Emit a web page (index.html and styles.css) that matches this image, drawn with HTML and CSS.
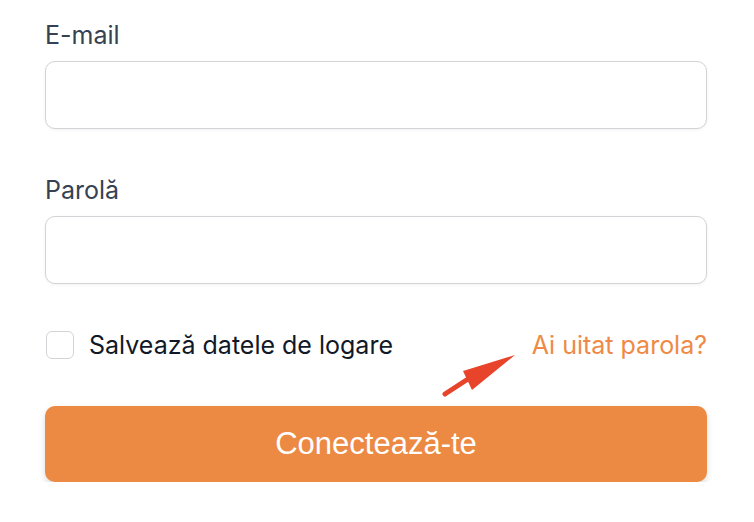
FILE: index.html
```html
<!DOCTYPE html>
<html lang="ro">
<head>
    <meta charset="UTF-8">
    <meta name="viewport" content="width=device-width, initial-scale=1.0">
    <title>Conectare</title>
    <link rel="stylesheet" href="styles.css">
</head>
<body>
    <form class="loginForm">
        <div class="field">
            <label for="email">E-mail</label>
            <input type="email" id="email">
        </div>

        <div class="field">
            <label for="password">Parolă</label>
            <input type="password" id="password">
        </div>

        <div class="optionsRow">
            <label class="remember">
                <span class="checkBox"></span>
                Salvează datele de logare
            </label>
            <a href="#" class="forgotLink">Ai uitat parola?</a>

            <!-- annotation arrow -->
            <svg class="hintArrow" width="80" height="50" viewBox="0 0 80 50">
                <line x1="5" y1="44" x2="28" y2="29" stroke="#e8432b" stroke-width="5" stroke-linecap="round"/>
                <polygon points="75,5 23,21 32,40" fill="#e8432b"/>
            </svg>
        </div>

        <button type="submit" class="submitBtn">Conectează-te</button>
    </form>
</body>
</html>
```

FILE: styles.css
```css
body {
    margin: 0;
    padding: 0;
    background: #ffffff;
    font-family: Inter, "Noto Sans", sans-serif;
}

.loginForm {
    width: 662px;
    margin-left: 45px;
    padding-top: 19px;
}

.field {
    display: flex;
    flex-direction: column;
    margin-bottom: 45px;
}

.field label {
    font-size: 25px;
    line-height: 32px;
    color: #374151;
    margin-bottom: 10px;
}

.field input {
    height: 68px;
    box-sizing: border-box;
    border: 1px solid #d4d4d8;
    border-radius: 10px;
    box-shadow: 0 1px 3px rgba(0, 0, 0, 0.06);
    font-size: 20px;
    padding: 0 16px;
    outline: none;
}

.optionsRow {
    position: relative;
    display: flex;
    justify-content: space-between;
    align-items: center;
    height: 32px;
    margin-top: 1px;
    margin-bottom: 45px;
}

.remember {
    display: flex;
    align-items: center;
    gap: 15px;
    font-size: 25px;
    color: #111827;
}

.checkBox {
    width: 28px;
    height: 28px;
    box-sizing: border-box;
    border: 1px solid #d4d4d8;
    border-radius: 6px;
    margin-left: 1px;
}

.forgotLink {
    font-size: 25px;
    color: #ee8a45;
    text-decoration: none;
}

.hintArrow {
    position: absolute;
    left: 395px;
    top: 21px;
}

.submitBtn {
    display: block;
    width: 100%;
    height: 76px;
    border: none;
    border-radius: 10px;
    background: #ec8942;
    color: #ffffff;
    font-family: "Liberation Sans", Arial, sans-serif;
    font-size: 31px;
    box-shadow: 0 3px 6px rgba(0, 0, 0, 0.15);
    cursor: pointer;
}
```
